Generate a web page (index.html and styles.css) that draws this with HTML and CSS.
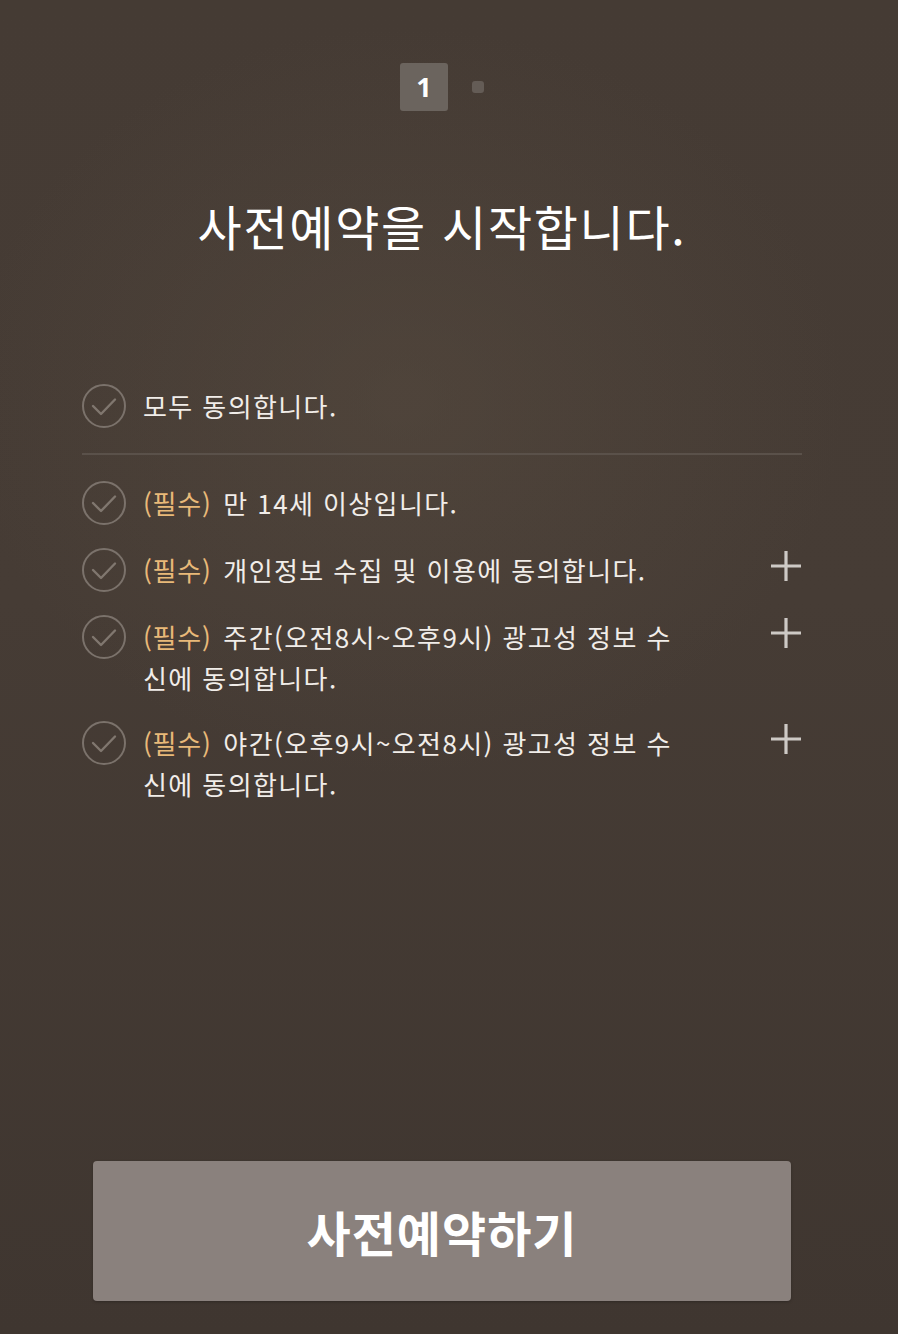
FILE: index.html
```html
<!DOCTYPE html>
<html lang="ko">
<head>
<meta charset="utf-8">
<title>사전예약</title>
<link rel="stylesheet" href="styles.css">
</head>
<body>
<div class="page">
  <div class="stepper">
    <div class="step-active">1</div>
    <div class="step-dot"></div>
  </div>
  <h1 class="title">사전예약을 시작합니다.</h1>

  <div class="agree-all">
    <div class="row">
      <svg class="check" viewBox="0 0 44 44" width="44" height="44"><circle cx="22" cy="22" r="21" fill="none" stroke="#7b726b" stroke-width="2"/><path d="M11 22 L19 30 L33 15.5" fill="none" stroke="#80776f" stroke-width="2.4" stroke-linecap="round" stroke-linejoin="round"/></svg>
      <div class="label">모두 동의합니다.</div>
    </div>
  </div>

  <div class="agree-list">
    <div class="row">
      <svg class="check" viewBox="0 0 44 44" width="44" height="44"><circle cx="22" cy="22" r="21" fill="none" stroke="#7b726b" stroke-width="2"/><path d="M11 22 L19 30 L33 15.5" fill="none" stroke="#80776f" stroke-width="2.4" stroke-linecap="round" stroke-linejoin="round"/></svg>
      <div class="label"><span class="req">(필수)</span> 만 14세 이상입니다.</div>
    </div>
    <div class="row">
      <svg class="check" viewBox="0 0 44 44" width="44" height="44"><circle cx="22" cy="22" r="21" fill="none" stroke="#7b726b" stroke-width="2"/><path d="M11 22 L19 30 L33 15.5" fill="none" stroke="#80776f" stroke-width="2.4" stroke-linecap="round" stroke-linejoin="round"/></svg>
      <div class="label"><span class="req">(필수)</span> 개인정보 수집 및 이용에 동의합니다.</div>
      <svg class="plus" viewBox="0 0 32 32" width="32" height="32"><path d="M16 1 V31 M1 16 H31" stroke="#cdc9c5" stroke-width="3.2"/></svg>
    </div>
    <div class="row">
      <svg class="check" viewBox="0 0 44 44" width="44" height="44"><circle cx="22" cy="22" r="21" fill="none" stroke="#7b726b" stroke-width="2"/><path d="M11 22 L19 30 L33 15.5" fill="none" stroke="#80776f" stroke-width="2.4" stroke-linecap="round" stroke-linejoin="round"/></svg>
      <div class="label"><span class="req">(필수)</span> 주간(오전8시~오후9시) 광고성 정보 수신에 동의합니다.</div>
      <svg class="plus" viewBox="0 0 32 32" width="32" height="32"><path d="M16 1 V31 M1 16 H31" stroke="#cdc9c5" stroke-width="3.2"/></svg>
    </div>
    <div class="row">
      <svg class="check" viewBox="0 0 44 44" width="44" height="44"><circle cx="22" cy="22" r="21" fill="none" stroke="#7b726b" stroke-width="2"/><path d="M11 22 L19 30 L33 15.5" fill="none" stroke="#80776f" stroke-width="2.4" stroke-linecap="round" stroke-linejoin="round"/></svg>
      <div class="label"><span class="req">(필수)</span> 야간(오후9시~오전8시) 광고성 정보 수신에 동의합니다.</div>
      <svg class="plus" viewBox="0 0 32 32" width="32" height="32"><path d="M16 1 V31 M1 16 H31" stroke="#cdc9c5" stroke-width="3.2"/></svg>
    </div>
  </div>

  <div class="spacer"></div>
  <button class="submit">사전예약하기</button>
</div>
</body>
</html>
```

FILE: styles.css
```css
html, body {
  margin: 0;
  padding: 0;
}
body {
  width: 898px;
  height: 1334px;
  overflow: hidden;
  font-family: "Noto Sans CJK KR", "Noto Sans", sans-serif;
  background: #433932;
}
.page {
  height: 1334px;
  display: flex;
  flex-direction: column;
  box-sizing: border-box;
  padding-right: 14px;
  background:
    radial-gradient(ellipse 70% 40% at 45% 30%, rgba(90, 78, 66, 0.45), rgba(90, 78, 66, 0) 70%),
    linear-gradient(180deg, #453b34 0%, #463c35 45%, #3f3630 100%);
}
.stepper {
  margin-top: 63px;
  display: flex;
  justify-content: center;
  align-items: center;
  gap: 24px;
}
.step-active {
  width: 48px;
  height: 48px;
  border-radius: 3px;
  background: #6b645e;
  color: #ffffff;
  font-family: "Noto Sans", sans-serif;
  font-weight: 700;
  font-size: 27px;
  line-height: 48px;
  text-align: center;
}
.step-dot {
  width: 12px;
  height: 12px;
  border-radius: 3px;
  background: #645c56;
}
.title {
  margin: 84px 0 0;
  text-align: center;
  color: #ffffff;
  font-weight: 400;
  font-size: 48px;
  line-height: 60px;
  letter-spacing: 1.7px;
}
.agree-all {
  margin: 129px 82px 0 82px;
  padding-bottom: 25px;
  border-bottom: 2px solid #5a514a;
}
.agree-list {
  margin: 26px 82px 0 82px;
  display: flex;
  flex-direction: column;
  gap: 23px;
}
.row {
  display: flex;
  align-items: flex-start;
}
.check {
  flex: none;
  display: block;
}
.label {
  margin-left: 17px;
  width: 540px;
  color: #f1ede9;
  font-size: 26px;
  line-height: 41px;
  letter-spacing: 1.4px;
  padding-top: 1px;
}
.req {
  color: #e8b979;
  letter-spacing: 0.8px;
  margin-right: 3px;
}
.plus {
  flex: none;
  display: block;
  margin-left: auto;
  margin-top: 2px;
}
.spacer {
  flex: 1;
}
.submit {
  margin: 0 93px 33px 93px;
  height: 140px;
  border: none;
  border-radius: 4px;
  background: #8a817d;
  color: #ffffff;
  font-family: "Noto Sans CJK KR", sans-serif;
  font-weight: 700;
  font-size: 48px;
  letter-spacing: 1px;
  padding: 0;
  box-shadow: 0 1px 3px rgba(0,0,0,0.25);
}
```
